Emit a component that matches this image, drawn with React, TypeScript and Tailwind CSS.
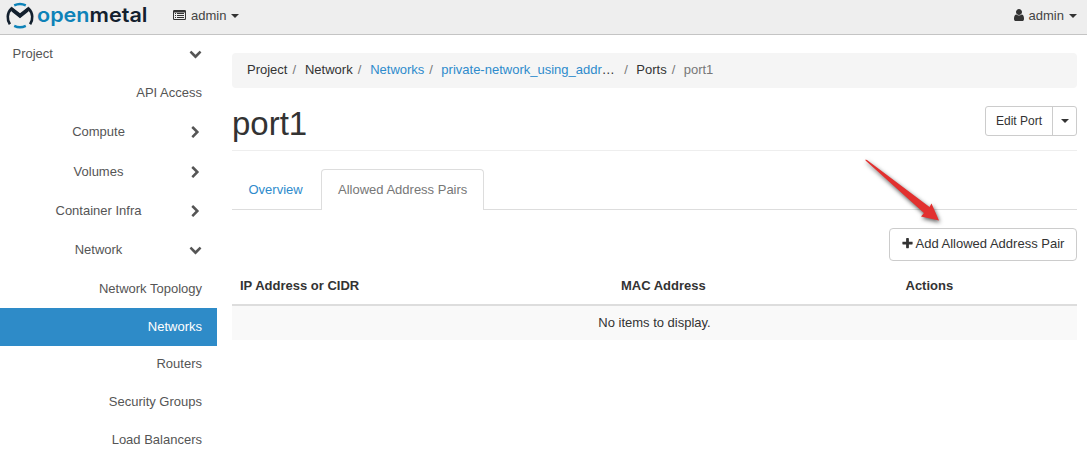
import React from "react";

const FA = {
  down: "M1683 808l-742 741q-19 19-45 19t-45-19l-742-741q-19-19-19-45.5t19-45.5l166-165q19-19 45-19t45 19l531 531 531-531q19-19 45-19t45 19l166 165q19 19 19 45.5t-19 45.5z",
  right: "M1363 877l-742 742q-19 19-45 19t-45-19l-166-166q-19-19-19-45t19-45l531-531-531-531q-19-19-19-45t19-45l166-166q19-19 45-19t45 19l742 742q19 19 19 45t-19 45z",
  plus: "M1600 736v192q0 40-28 68t-68 28h-416v416q0 40-28 68t-68 28h-192q-40 0-68-28t-28-68v-416h-416q-40 0-68-28t-28-68v-192q0-40 28-68t68-28h416v-416q0-40 28-68t68-28h192q40 0 68 28t28 68v416h416q40 0 68 28t28 68z",
  user: "M1536 1399q0 109-62.5 187t-150.5 78h-854q-88 0-150.5-78t-62.5-187q0-85 8.5-160.5t31.5-152 58.5-131 94-89 134.5-34.5q131 128 313 128t313-128q76 0 134.5 34.5t94 89 58.5 131 31.5 152 8.5 160.5zm-256-887q0 159-112.5 271.5t-271.5 112.5-271.5-112.5-112.5-271.5 112.5-271.5 271.5-112.5 271.5 112.5 112.5 271.5z",
};

function Icon({ name, className = "size-[13px]" }: { name: keyof typeof FA; className?: string }) {
  return (
    <svg viewBox="0 0 1792 1792" className={`shrink-0 fill-current ${className}`} aria-hidden="true">
      <path d={FA[name]} />
    </svg>
  );
}

function Caret({ className = "" }: { className?: string }) {
  return (
    <svg viewBox="0 0 8 4" className={`h-1 w-2 shrink-0 fill-current ${className}`} aria-hidden="true">
      <path d="M0 0h8L4 4z" />
    </svg>
  );
}

function ListIcon() {
  return (
    <svg viewBox="0 0 13 10" className="mb-0.5 h-[10px] w-[13px] shrink-0" fill="currentColor" aria-hidden="true">
      <path fillRule="evenodd" d="M1.200 0h10.600Q13 0 13 1.200v7.600q0 1.200-1.200 1.200H1.200Q0 10 0 8.800V1.200Q0 0 1.200 0zM1 2.500v6.100q0 .4.4.4h10.200q.4 0 .4-.4V2.500z" />
      <path d="M2 3h1v1H2zM4 3h7v1H4zM2 5h1v1H2zM4 5h7v1H4zM2 7h1v1H2zM4 7h7v1H4z" />
    </svg>
  );
}

function Logo() {
  return (
    <svg viewBox="0 0 148 31" className="h-[31px] w-[148px] shrink-0" aria-label="openmetal">
      <path d="M14.200 5.400Q20 2.600 25.800 5.400M14.200 25.900Q20 28.700 25.800 25.900" fill="none" stroke="#0d82b8" strokeWidth="2.400" />
      <path d="M9.900 24.300C6.700 19.500 7 13 11.300 8.800L20 15.800L28.700 8.800C33 13 33.300 19.500 30.100 24.300" fill="none" stroke="#13202e" strokeWidth="2.600" />
      <path d="M11.300 6.600L20 13.200L28.700 6.600L28.500 11.500L20 18.300L11.500 11.500z" fill="#13202e" />
      <text x="37" y="21.700" textLength="110.500" lengthAdjust="spacingAndGlyphs" className="font-['Inter',sans-serif] text-[20px] font-[560]">
        <tspan fill="#0d82b8">open</tspan>
        <tspan fill="#13202e">metal</tspan>
      </text>
    </svg>
  );
}

function Group({ label, open = false, className = "" }: { label: string; open?: boolean; className?: string }) {
  return (
    <div className={`flex items-center pr-[15px] ${className}`}>
      <span className="flex-1 pl-2 text-center">{label}</span>
      <Icon name={open ? "down" : "right"} />
    </div>
  );
}

function Leaf({ label, className = "" }: { label: string; className?: string }) {
  return <div className={`flex items-center justify-end pr-[15px] ${className}`}>{label}</div>;
}

export default function App() {
  return (
    <div className="flex h-[454px] w-[1087px] flex-col overflow-hidden bg-white font-['Liberation_Sans',Arial,sans-serif] text-[13px] leading-[18px] text-[#333]">
      <header className="flex h-[35px] shrink-0 items-center border-b border-[#c4c4c4] bg-[#eee] pb-[3px]">
        <Logo />
        <div className="ml-[25px] flex items-center text-[#444]">
          <span className="flex text-[#333]"><ListIcon /></span>
          <span className="ml-[5px]">admin</span>
          <Caret className="ml-[5px] text-[#333]" />
        </div>
        <div className="ml-auto flex items-center pr-[10px] text-[#444]">
          <Icon name="user" className="mb-px size-[14px] text-[#333]" />
          <span className="ml-[3px]">admin</span>
          <Caret className="ml-[5px] text-[#333]" />
        </div>
      </header>

      <div className="flex min-h-0 flex-1">
        <nav className="w-[217px] shrink-0 text-[#555]">
          <div className="flex h-[38px] items-center justify-between pr-[15px] pl-[12.5px]">
            <span>Project</span>
            <Icon name="down" className="mb-0.5 size-[13px]" />
          </div>
          <Leaf label="API Access" className="h-[40px]" />
          <Group label="Compute" className="h-[39px] pb-px" />
          <Group label="Volumes" className="h-[40px]" />
          <Group label="Container Infra" className="h-[39px] pb-px" />
          <Group label="Network" open className="h-[39px] pb-0.5" />
          <Leaf label="Network Topology" className="h-[38px]" />
          <Leaf label="Networks" className="h-[38px] bg-[#2e8bc8] text-white" />
          <Leaf label="Routers" className="h-[37px] pb-px" />
          <Leaf label="Security Groups" className="h-[38px]" />
          <Leaf label="Load Balancers" className="h-[38px]" />
        </nav>

        <main className="ml-[15px] w-[845px] pt-[18px]">
          <nav className="flex h-[35px] items-center rounded-[4px] bg-[#f5f5f5] px-[15px] pb-[2px] text-[#777]">
            <span className="text-[#333]">Project</span>
            <span className="w-[17.500px] pl-[5px]">/</span>
            <span className="text-[#333]">Network</span>
            <span className="w-[17.500px] pl-[5px]">/</span>
            <a className="text-[#2e8bcc]">Networks</a>
            <span className="w-[17px] pl-[5px]">/</span>
            <a className="w-[174px] text-[#2e8bcc]">private-network_using_addr<span className="text-[#333]">…</span></a>
            <span className="w-[21px] pl-[9px]">/</span>
            <span className="text-[#333]">Ports</span>
            <span className="w-[17px] pl-[5px]">/</span>
            <span>port1</span>
          </nav>

          <div className="flex h-[63px] items-start justify-between border-b border-[#eee] pt-[18px]">
            <h1 className="text-[33px] leading-[36px]">port1</h1>
            <div className="flex h-[30px] rounded-[3px] border border-[#ccc] bg-white text-[12px]">
              <button className="w-[67px] border-r border-[#ccc]">Edit Port</button>
              <button className="flex w-[23px] items-center justify-center" aria-label="More actions"><Caret /></button>
            </div>
          </div>

          <div className="mt-[18px] flex h-[41px] border-b border-[#ddd]">
            <a className="h-[41px] w-[89px] pt-3 pl-[16.500px] text-[#2e8bcc]">Overview</a>
            <a className="h-[41px] w-[163px] rounded-t-[4px] border border-b-0 border-[#ddd] bg-white pt-[11px] pl-4 text-[#777]">Allowed Address Pairs</a>
          </div>

          <div className="relative mt-[18px] flex justify-end">
            <svg className="absolute -top-[73px] right-[132px] h-[73px] w-[84px] overflow-visible" viewBox="0 0 84 73" aria-hidden="true">
              <path d="M4.500 4.500L6 5L68.500 52L70.500 48.500L78 65.500L60 61.500L63 58L4.500 5.500Z" fill="#e2302f" className="drop-shadow-[1.500px_2px_2px_rgba(0,0,0,0.65)]" />
            </svg>
            <button className="flex h-[33px] w-[188px] items-center rounded-[4px] border border-[#ccc] bg-white pb-px pl-[11px]">
              <Icon name="plus" className="mb-0.5 size-[13px]" />
              <span className="ml-[1.500px] whitespace-nowrap">Add Allowed Address Pair</span>
            </button>
          </div>

          <table className="mt-[6px] w-full table-fixed border-separate border-spacing-0 text-left">
            <thead>
              <tr>
                <th className="h-[39px] w-[381px] border-b-2 border-[#ddd] px-2">IP Address or CIDR</th>
                <th className="w-[284.500px] border-b-2 border-[#ddd] px-2">MAC Address</th>
                <th className="border-b-2 border-[#ddd] px-2">Actions</th>
              </tr>
            </thead>
            <tbody>
              <tr className="bg-[#f9f9f9]">
                <td colSpan={3} className="h-[34px] pb-px text-center">No items to display.</td>
              </tr>
            </tbody>
          </table>
        </main>
      </div>
    </div>
  );
}
